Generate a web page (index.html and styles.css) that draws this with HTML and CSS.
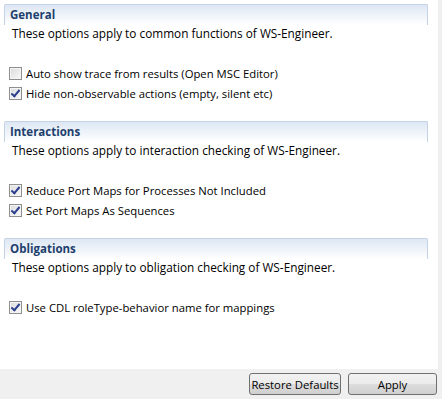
FILE: index.html
```html
<!doctype html>
<html>
<head>
    <meta charset="utf-8">
    <link rel="stylesheet" href="styles.css">
</head>
<body>
<div class="page">
    <div class="content">
        <div class="section">
            <div class="header">General</div>
            <p class="desc">These options apply to common functions of WS-Engineer.</p>
            <label class="check"><span class="box"></span>Auto show trace from results (Open MSC Editor)</label>
            <label class="check"><span class="box on"></span>Hide non-observable actions (empty, silent etc)</label>
        </div>
        <div class="section">
            <div class="header">Interactions</div>
            <p class="desc">These options apply to interaction checking of WS-Engineer.</p>
            <label class="check"><span class="box on"></span>Reduce Port Maps for Processes Not Included</label>
            <label class="check"><span class="box on"></span>Set Port Maps As Sequences</label>
        </div>
        <div class="section">
            <div class="header">Obligations</div>
            <p class="desc">These options apply to obligation checking of WS-Engineer.</p>
            <label class="check"><span class="box on"></span>Use CDL roleType-behavior name for mappings</label>
        </div>
    </div>
    <div class="buttons">
        <button class="btn restore">Restore Defaults</button>
        <button class="btn apply">Apply</button>
    </div>
</div>
</body>
</html>
```

FILE: styles.css
```css
html, body {
    margin: 0;
    padding: 0;
    background: #f0f0f0;
}
body {
    font: 11.3px "Open Sans", "DejaVu Sans", sans-serif;
    color: #000;
}
.page {
    width: 442px;
    height: 399px;
    display: flex;
    flex-direction: column;
}
.content {
    width: 438px;
    height: 369px;
    background: #fff;
    padding-top: 4px;
    box-sizing: border-box;
}
.section {
    display: flex;
    flex-direction: column;
    margin-bottom: 18px;
}
.header {
    margin: 0 10px 0 4px;
    height: 20px;
    line-height: 20px;
    padding-left: 5px;
    border: 1px solid #c4d3e6;
    border-bottom: 0;
    border-radius: 2px 2px 0 0;
    background: linear-gradient(#dde7f3, #ffffff);
    color: #1e3f6d;
    font-weight: bold;
    font-size: 11.5px;
}
.desc {
    margin: 0;
    padding-left: 12px;
    line-height: 17px;
    height: 17px;
    margin-bottom: 21px;
    font-size: 11.8px;
}
.check {
    display: flex;
    align-items: center;
    height: 20px;
    padding-left: 9px;
}
.box {
    width: 11px;
    height: 11px;
    border: 1px solid #8f8f8f;
    background: linear-gradient(135deg, #dcdcdc, #f8f8f8);
    margin-right: 4px;
    position: relative;
    box-shadow: inset 0 0 0 1px #f4f4f4;
}
.box.on::after {
    content: "";
    position: absolute;
    left: 3px;
    top: 0px;
    width: 3px;
    height: 7px;
    border: solid #2a3f8e;
    border-width: 0 2px 2px 0;
    transform: rotate(40deg);
}
.buttons {
    flex: 1;
    display: flex;
    justify-content: flex-end;
    align-items: center;
    gap: 7px;
    padding-right: 5px;
}
.btn {
    height: 22px;
    font: 11.3px "Open Sans", "DejaVu Sans", sans-serif;
    color: #000;
    border: 1px solid #707070;
    border-radius: 3px;
    background: linear-gradient(#f2f2f2 0%, #ebebeb 50%, #dddddd 51%, #cfcfcf 100%);
    padding: 0;
    white-space: nowrap;
}
.restore {
    width: 92px;
}
.apply {
    width: 89px;
}
```
